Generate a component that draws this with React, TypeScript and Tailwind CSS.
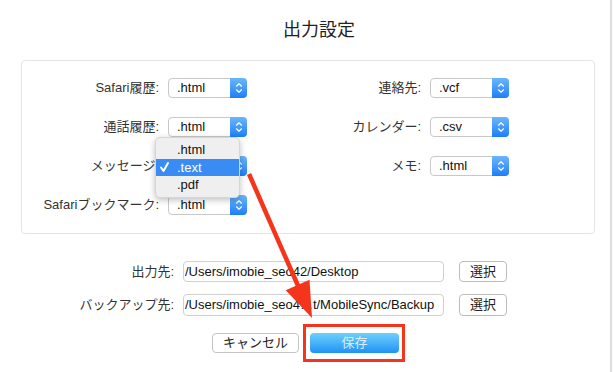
import React from "react";

function Stepper() {
  return (
    <div className="w-[17px] h-[20px] -my-px -mr-px rounded-r-[4px] bg-gradient-to-b from-[#6ab6fb] to-[#1a7ef9] flex items-center justify-center">
      <svg width="8" height="12" viewBox="0 0 8 12" fill="none">
        <path d="M1.5 4.2 L4 1.8 L6.5 4.2" stroke="white" strokeWidth="1.2" strokeLinecap="round" strokeLinejoin="round" />
        <path d="M1.5 7.8 L4 10.2 L6.5 7.8" stroke="white" strokeWidth="1.2" strokeLinecap="round" strokeLinejoin="round" />
      </svg>
    </div>
  );
}

function Select({ value }: { value: string }) {
  return (
    <div className="w-[79px] h-[20px] border border-[#c8c8c8] rounded-[4px] bg-white flex items-center">
      <span className="flex-1 pl-[8px] text-[13px] leading-[18px] text-[#111]">{value}</span>
      <Stepper />
    </div>
  );
}

function Row({ label, value }: { label: string; value: string }) {
  return (
    <div className="flex items-center h-[20px]">
      <span className="text-[13px] text-[#333] mr-[9px] whitespace-nowrap">{label}</span>
      <Select value={value} />
    </div>
  );
}

export default function App() {
  return (
    <div className="relative flex w-[613px] h-[372px] bg-white overflow-hidden font-['Liberation_Sans','Noto_Sans_CJK_JP',sans-serif]">
      <div className="w-[610px] flex flex-col">
        <div className="h-[60px] pl-[283px] pt-[19px] text-[18px] leading-[22px] text-[#222]">出力設定</div>
        <div className="ml-[21px] w-[574px] h-[174px] border border-[#e4e4e4] rounded-[4px] flex pt-[17px]">
          <div className="w-[225px] flex flex-col gap-[19px] items-end">
            <Row label="Safari履歴:" value=".html" />
            <Row label="通話履歴:" value=".html" />
            <Row label="メッセージ:" value="" />
            <Row label="Safariブックマーク:" value=".html" />
          </div>
          <div className="w-[262px] flex flex-col gap-[19px] items-end">
            <Row label="連絡先:" value=".vcf" />
            <Row label="カレンダー:" value=".csv" />
            <Row label="メモ:" value=".html" />
          </div>
        </div>

        <div className="mt-[27px] flex items-center h-[21px]">
          <span className="w-[174px] text-right text-[13px] text-[#333]">出力先:</span>
          <div className="ml-[9px] w-[261px] h-[21px] border border-[#d0d0d0] rounded-[4px] bg-white flex items-center pl-[1px] text-[13px] text-[#111] whitespace-nowrap overflow-hidden">/Users/imobie_seo42/Desktop</div>
          <div className="ml-[15px] w-[48px] h-[21px] border border-[#bdbdbd] rounded-[4px] bg-white flex items-center justify-center text-[13px] text-[#222]">選択</div>
        </div>
        <div className="mt-[12px] flex items-center h-[22px]">
          <span className="w-[174px] text-right text-[13px] text-[#333]">バックアップ先:</span>
          <div className="ml-[9px] w-[261px] h-[22px] border border-[#d0d0d0] rounded-[4px] bg-white flex items-center pl-[1px] text-[13px] text-[#111] whitespace-nowrap overflow-hidden">/Users/imobie_seo4…t/MobileSync/Backup</div>
          <div className="ml-[15px] w-[48px] h-[22px] border border-[#bdbdbd] rounded-[4px] bg-white flex items-center justify-center text-[13px] text-[#222]">選択</div>
        </div>

        <div className="mt-[8px] flex items-center pl-[212px]">
          <div className="w-[87px] h-[20px] border border-[#c4c4c4] rounded-[4px] bg-white flex items-center justify-center text-[13px] text-[#222]">キャンセル</div>
          <div className="ml-[4px] border-[3px] border-[#f5341c] pt-[6px] pb-[6px] pl-[4px] pr-[3px]">
            <div className="w-[89px] h-[20px] rounded-[4px] bg-gradient-to-b from-[#6dd0fd] to-[#1b92f3] flex items-center justify-center text-[13px] text-[#d8eeff]">保存</div>
          </div>
        </div>
      </div>
      <div className="w-[2px] h-full bg-[#dedede]" />

      {/* popup menu */}
      <div className="absolute left-[155px] top-[137px] w-[85px] h-[61px] rounded-[5px] bg-[#efefef] border border-[#d6d6d6] shadow-[0_2px_6px_rgba(0,0,0,0.25)] pt-[3px]">
        <div className="h-[18px] flex items-center pl-[21px] text-[13px] text-[#111]">.html</div>
        <div className="h-[17px] flex items-center bg-[#3a8cf5] text-[13px] text-white">
          <svg width="21" height="17" viewBox="0 0 21 17" fill="none">
            <path d="M5 8.5 L7.5 12 L12 4" stroke="white" strokeWidth="2" strokeLinecap="round" strokeLinejoin="round" />
          </svg>
          <span>.text</span>
        </div>
        <div className="h-[18px] flex items-center pl-[21px] text-[13px] text-[#111]">.pdf</div>
      </div>

      {/* annotation arrow */}
      <svg className="absolute left-0 top-0 pointer-events-none" width="613" height="372" viewBox="0 0 613 372">
        <line x1="249" y1="174" x2="299" y2="288" stroke="#f5341c" strokeWidth="4.5" />
        <polygon points="312,318 309.5,279.8 285.7,290.2" fill="#f5341c" />
      </svg>
    </div>
  );
}
